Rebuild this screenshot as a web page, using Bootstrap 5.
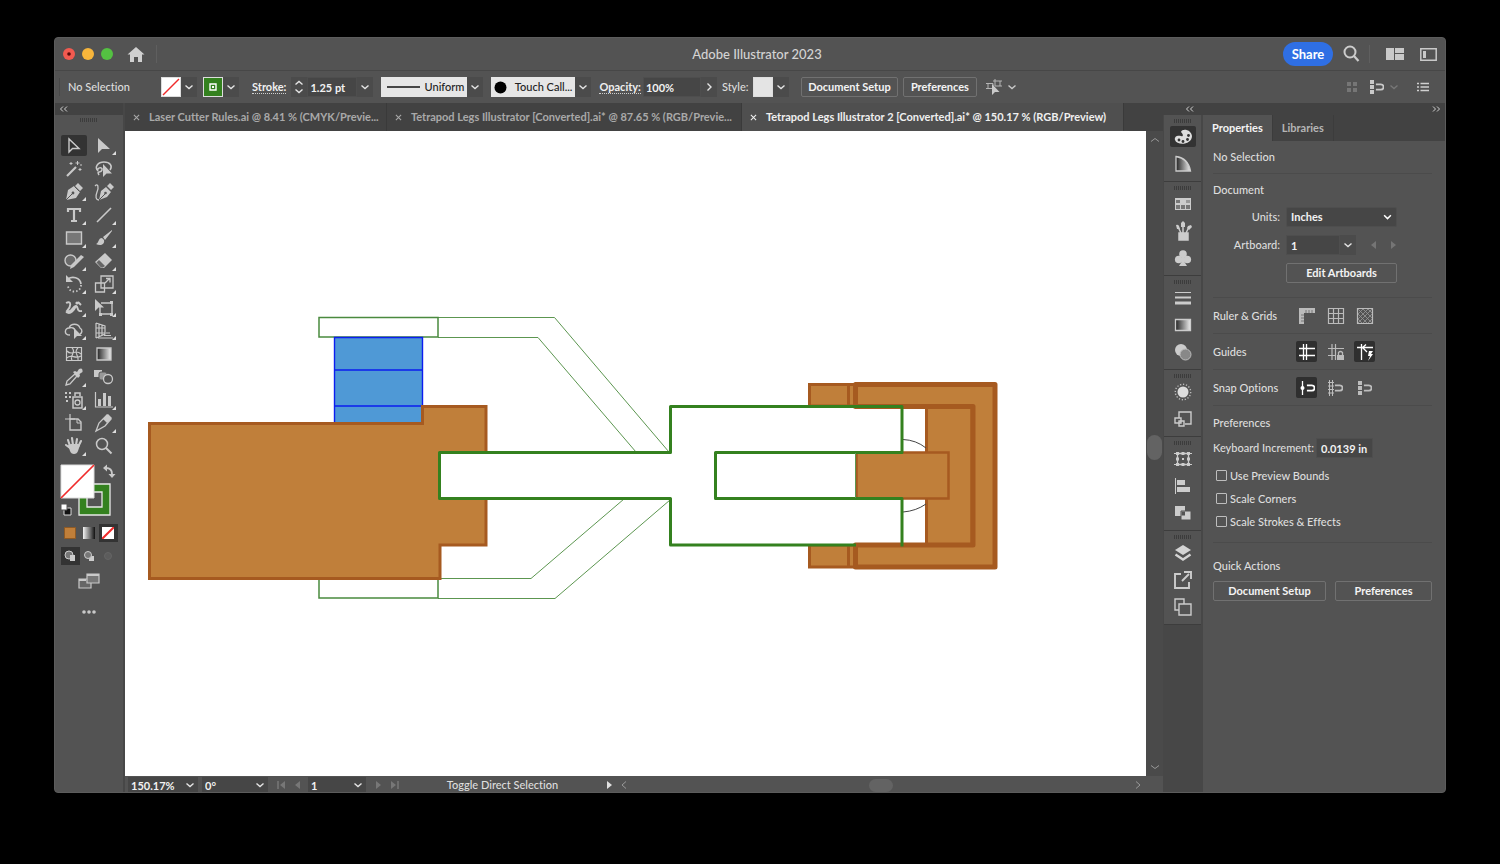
<!DOCTYPE html>
<html lang="en">
<head>
<meta charset="utf-8">
<meta name="viewport" content="width=device-width, initial-scale=1">
<title>Adobe Illustrator 2023</title>
<link href="https://cdn.jsdelivr.net/npm/bootstrap@5.3.0/dist/css/bootstrap.min.css" rel="stylesheet">
<style>
:root{--panel:#535353;--dark:#424242;--line:#474747;--field:#464646;--icon:#c9c9c9;--txt:#dedede}
body{background:#000;color:var(--txt);font-family:"Lato","Open Sans",sans-serif;font-size:11px;font-weight:500;line-height:14px;font-variant-ligatures:none;padding:37px 54px 71px}
button,input,select{font:inherit;color:inherit}
svg{display:block;fill:none;stroke:none}
.app-window{background:var(--panel);border-radius:4px;overflow:hidden;border:1px solid #5c5c5c}
.title-bar{height:33px;border-bottom:1px solid var(--line)}
.title-bar h1{font-size:13px;line-height:16px;font-weight:500;color:#d4d4d4;padding-left:14px}
.dot{width:12px;height:12px;border-radius:50%}
.plain-btn{background:none;border:0;padding:0;display:flex;align-items:center;justify-content:center;color:var(--icon)}
.share-btn{background:#2f6fe4;color:#fff;border:0;border-radius:12px;height:24px;width:50px;font-size:13px;font-weight:700}
.vline{width:1px;height:18px;background:#5f5f5f}
.control-bar{height:32px;color:var(--txt)}
.swatch{width:20px;height:20px;border:1px solid #ddd}
.drop{width:16px;height:20px;background:#4b4b4b;color:#e4e4e4}
.line-btn{background:transparent;border:1px solid #717171;border-radius:2px;color:#f4f4f4;font-weight:700;height:20px;padding:0;line-height:14px}
.field{background:var(--field);border:1px solid #4e4e4e;color:#f2f2f2;font-weight:700;height:20px;padding:0 2px;min-width:0;border-radius:0}
.props .field{padding:0 4px}
.under{border-bottom:1px dotted #cfcfcf;color:#f0f0f0;font-weight:700;line-height:13px}
.brush{background:#e6e6e6;color:#222;height:20px;border:0;padding:0 3px;display:flex;align-items:center;justify-content:space-between}
.dark-strip{background:var(--dark)}
.tool-col{width:70px;border-right:2px solid var(--line)}
.tool-grid{display:grid;grid-template-columns:30px 30px;grid-auto-rows:1fr;height:324px}
.tool{position:relative;border-radius:2px;color:var(--icon)}
.tool.active{background:#333;margin:1px 2px}
.more::after{content:"";position:absolute;right:3px;bottom:2px;border:2px solid transparent;border-right-color:#ddd;border-bottom-color:#ddd}
.grip{width:18px;height:4px;background:repeating-linear-gradient(90deg,#3c3c3c 0 1px,transparent 1px 2px)}
.doc-tab{color:#a9a9a9;font-weight:700;height:28px;border:0;border-right:1px solid #3a3a3a;padding:0 8px;background:var(--dark);white-space:nowrap}
.doc-tab.active{background:#4f4f4f;color:#f0f0f0}
.doc-tab a{color:inherit;text-decoration:none}
.doc-tab .plain-btn{color:inherit;width:7px;margin-right:9px}
.canvas{background:#fff;min-height:0}
.canvas svg{width:100%;height:100%}
.v-scroll{width:17px;background:#4a4a4a;color:#999}
.thumb{background:#636363;border-radius:8px}
.status-bar{height:16px;overflow:hidden;padding:2px 0 0 3px}
.status-bar .field,.status-bar .drop{height:16px;border-color:#464646;background:#464646}
.dock{width:40px;background:var(--line)}
.dock-group{background:var(--panel);border-bottom:1px solid #3d3d3d;margin:0 2px 0 1px;padding:4px 0 4px}
.dock-group .plain-btn{width:26px;height:27px}
.dock-group .lit{background:#333;border-radius:2px;height:21px;margin:3px 0}
.props{width:242px}
.prop-tab{height:26px;padding:0 9px;color:#b5b5b5;font-weight:700;background:var(--dark);border:0;border-right:1px solid #3c3c3c}
.prop-tab.active{background:var(--panel);color:#f4f4f4}
.sec{padding:9px 0;margin:0 13px 0 10px;border-bottom:1px solid #4b4b4b}
.sec-row{height:36px;padding:0}
.lbl{color:#dcdcdc}
.sec h2{font-size:11px;line-height:14px;font-weight:500;margin:0}
.mini{width:21px;height:21px;border-radius:2px;color:#bdbdbd}
.mini.on{background:#2f2f2f;color:#fff}
.units{appearance:none;width:111px;border-radius:2px;background:var(--field) url("data:image/svg+xml,%3Csvg xmlns='http://www.w3.org/2000/svg' viewBox='0 0 8 6'%3E%3Cpath d='M1 1l3 3 3-3' fill='none' stroke='%23fff' stroke-width='1.3'/%3E%3C/svg%3E") no-repeat right 4px center/9px 7px}
.tick{appearance:none;width:11px;height:11px;border:1px solid #bdbdbd;border-radius:1px;margin:0}
.tick-row{height:23px;gap:3px;padding-left:3px}
</style>
<script src="https://cdn.jsdelivr.net/npm/bootstrap@5.3.0/dist/js/bootstrap.bundle.min.js"></script>
</head>
<body class="min-vh-100 d-flex flex-column">
<svg width="0" height="0" class="position-absolute" aria-hidden="true">
<defs>
<linearGradient id="gr"><stop offset="0" stop-color="#222"/><stop offset="1" stop-color="#eee"/></linearGradient>
<linearGradient id="gr2"><stop offset="0" stop-color="#f4f4f4"/><stop offset="1" stop-color="#111"/></linearGradient>
<symbol id="chev" viewBox="0 0 10 10"><path d="M1.500 3.500 5 6.500 8.500 3.500" fill="none" stroke="currentColor" stroke-width="1.400"/></symbol>
<symbol id="close" viewBox="0 0 8 8"><path d="M1 1l6 6M7 1 1 7" stroke="currentColor" stroke-width="1.200"/></symbol>
<symbol id="dbl" viewBox="0 0 10 6"><path d="M4 .5 1.500 3 4 5.500M8 .5 5.500 3 8 5.500" fill="none" stroke="#d0d0d0"/></symbol>
<symbol id="dbr" viewBox="0 0 10 6"><path d="M2 .5 4.500 3 2 5.500M6 .5 8.500 3 6 5.500" fill="none" stroke="#d0d0d0"/></symbol>
<symbol id="mag" viewBox="0 0 10 10"><path d="M1 2h5.500a2.500 2.500 0 0 1 0 6H1" fill="none" stroke="currentColor" stroke-width="2"/></symbol>
</defs>
</svg>

<main class="app-window d-flex flex-column flex-grow-1">
<header class="title-bar d-grid align-items-center flex-shrink-0" style="grid-template-columns:1fr auto 1fr">
  <div class="d-flex align-items-center ps-2">
    <span class="dot" style="background:#f25a50;margin-right:7px"><svg viewBox="0 0 12 12"><circle cx="6" cy="6" r="1.800" fill="#5a0a08"/></svg></span>
    <span class="dot" style="background:#f7b53b;margin-right:7px"></span>
    <span class="dot" style="background:#54c142"></span>
    <button class="plain-btn" style="margin-left:14px" aria-label="Home"><svg width="18" height="17" viewBox="0 0 18 17"><path d="M9 1 .5 8.500H3V16h4v-5h4v5h4V8.500h2.500Z" fill="#d0d0d0"/></svg></button>
    <span class="vline" style="margin-left:11px"></span>
  </div>
  <h1 class="mb-0">Adobe Illustrator 2023</h1>
  <div class="d-flex align-items-center justify-content-end pe-2">
    <button class="share-btn">Share</button>
    <button class="plain-btn ms-2" aria-label="Search"><svg width="20" height="18" viewBox="0 0 20 18"><circle cx="9" cy="7" r="5.500" stroke="#ccc" stroke-width="2"/><path d="m13 11 4.500 5" stroke="#ccc" stroke-width="2.200"/></svg></button>
    <span class="vline ms-2"></span>
    <button class="plain-btn ms-3" aria-label="Arrange documents"><svg width="18" height="12" viewBox="0 0 18 12"><path d="M0 0h8v12H0zM9 0h9v5H9zM9 6h9v6H9z" fill="#c9c9c9"/></svg></button>
    <button class="plain-btn ms-3" aria-label="Workspace"><svg width="17" height="13" viewBox="0 0 17 13"><path d="M.8.800h15.400v11.400H.8z" stroke="#c9c9c9" stroke-width="1.500"/><path d="M3 3h3v7H3z" fill="#c9c9c9"/></svg></button>
  </div>
</header>

<section class="control-bar d-flex align-items-center flex-shrink-0" aria-label="Control bar">
  <span class="vline ms-1" style="background:#484848"></span>
  <span class="ms-2" style="width:93px">No Selection</span>
  <button class="plain-btn swatch bg-white" aria-label="Fill"><svg width="18" height="18"><path d="M1 17 17 1" stroke="#f02b2b" stroke-width="1.500"/></svg></button>
  <button class="plain-btn drop" aria-label="Fill options"><svg width="10" height="10"><use href="#chev"/></svg></button>
  <button class="plain-btn swatch" style="background:#34811f;margin-left:6px" aria-label="Stroke colour"><svg width="10" height="10"><path d="M2 2h6v6H2z" stroke="#fff" stroke-width="1.400"/><path d="M4 4h2v2H4z" fill="#fff"/></svg></button>
  <button class="plain-btn drop" aria-label="Stroke colour options"><svg width="10" height="10"><use href="#chev"/></svg></button>
  <label class="under" for="sw" style="margin-left:13px">Stroke:</label>
  <button class="plain-btn drop" style="margin-left:5px" aria-label="Step stroke"><svg width="10" height="16" viewBox="0 0 10 16"><path d="M1.500 5.500 5 2.500l3.500 3M1.500 10.500l3.500 3 3.500-3" stroke="#e4e4e4" stroke-width="1.400"/></svg></button>
  <input id="sw" class="field" style="width:50px" value="1.25 pt">
  <button class="plain-btn drop" aria-label="Stroke weights"><svg width="10" height="10"><use href="#chev"/></svg></button>
  <button class="brush ms-2" style="width:86px"><svg width="36" height="4"><path d="M3 2h33" stroke="#111" stroke-width="1.500"/></svg>Uniform</button>
  <button class="plain-btn drop" aria-label="Width profiles"><svg width="10" height="10"><use href="#chev"/></svg></button>
  <button class="brush ms-2" style="width:84px"><svg width="13" height="13"><circle cx="6.500" cy="6.500" r="6" fill="#000"/></svg>Touch Call...</button>
  <button class="plain-btn drop" aria-label="Brushes"><svg width="10" height="10"><use href="#chev"/></svg></button>
  <label class="under ms-2" for="op">Opacity:</label>
  <input id="op" class="field" style="width:58px;margin-left:2px" value="100%">
  <button class="plain-btn drop" aria-label="More opacity"><svg width="8" height="10"><path d="m2.500 1.500 3.500 3.500-3.500 3.500" stroke="#e4e4e4" stroke-width="1.400"/></svg></button>
  <span style="margin-left:5px;width:31px">Style:</span>
  <button class="plain-btn swatch" style="background:#e4e4e4" aria-label="Style"></button>
  <button class="plain-btn drop" aria-label="Styles"><svg width="10" height="10"><use href="#chev"/></svg></button>
  <button class="line-btn" style="width:97px;margin-left:12px">Document Setup</button>
  <button class="line-btn" style="width:74px;margin-left:5px">Preferences</button>
  <button class="plain-btn ms-2" aria-label="Select similar"><svg width="18" height="18" viewBox="0 0 18 18"><path d="M3 5.500h5v5H3zM10 3h5v5h-5zM1 5.500h2m-2 5h2M8 3h2M15 3h2M15 8h2M10 1v2" stroke="#b5b5b5"/><path d="m7 6 0 11 3-3h4.500Z" fill="#c9c9c9"/></svg></button>
  <button class="plain-btn ms-1" aria-label="Select similar options"><svg width="10" height="10"><use href="#chev"/></svg></button>
  <div class="ms-auto d-flex align-items-center pe-3">
    <svg width="12" height="12"><path d="M1 1h4v4H1zM7 1h4v4H7zM1 7h4v4H1zM7 7h4v4H7z" fill="#767676"/></svg>
    <button class="plain-btn" style="margin-left:12px" aria-label="Snap"><svg width="15" height="14" viewBox="0 0 15 14"><path d="M0 0h4v4H0zM0 5h4v4H0zM0 10h4v4H0z" fill="#c9c9c9"/><use href="#mag" x="5" y="2.500" width="9" height="9"/></svg></button>
    <button class="plain-btn ms-1" style="color:#777" aria-label="Snap options"><svg width="10" height="10"><use href="#chev"/></svg></button>
    <button class="plain-btn" style="margin-left:18px" aria-label="Menu"><svg width="12" height="10"><path d="M3.500 1.500H12M3.500 5H12M3.500 8.500H12M0 1.500h2M0 5h2M0 8.500h2" stroke="#d0d0d0" stroke-width="1.300"/></svg></button>
  </div>
</section>

<div class="d-flex flex-grow-1">
<!-- tools -->
<aside class="tool-col flex-shrink-0">
  <div class="dark-strip d-flex align-items-center ps-1" style="height:12px"><svg width="10" height="6"><use href="#dbl"/></svg></div>
  <div class="d-flex justify-content-center" style="height:19px;padding-top:3px"><span class="grip"></span></div>
  <div class="tool-grid mx-1">
    <button class="plain-btn tool active" aria-label="Selection"><svg width="20" height="20"><path d="M5 3v13l3.500-3.500h6.500Z" stroke="currentColor" stroke-width="1.400"/></svg></button>
    <button class="plain-btn tool more" aria-label="Direct selection"><svg width="20" height="20"><path d="M4 2v15l4-4h8Z" fill="currentColor"/></svg></button>
    <button class="plain-btn tool" aria-label="Magic wand"><svg width="20" height="20"><path d="m3 17 9-9" stroke="currentColor" stroke-width="2.200"/><path d="M13.500 2v4M11.500 4h4M7 3v3M5.500 4.500h3M16 9v3M14.500 10.500h3M17 5v2" stroke="currentColor"/></svg></button>
    <button class="plain-btn tool" aria-label="Lasso"><svg width="20" height="20"><path d="M4 12C0 8 4 3 10 3s9 4 6 8M4 12c-2-3 5-5 4-1s-6 0-3 5" stroke="currentColor" stroke-width="1.500"/><path d="M9 5v13l3.500-3.500H18Z" fill="currentColor"/></svg></button>
    <button class="plain-btn tool more" aria-label="Pen"><svg width="20" height="20"><path d="m11 4 3-3 5 5-3 3zM2 18 4 8l6-4 6 6-4 6Z" fill="currentColor"/><path d="m10.500 4.500 5 5M2 18l6-6" stroke="#535353"/><circle cx="9" cy="11" r="1.400" fill="#535353"/></svg></button>
    <button class="plain-btn tool" aria-label="Curvature"><svg width="20" height="20"><path d="m13 4 3-3 4 4-3 3zM5 18 7 9l5-4 5 5-4 5Z" fill="currentColor"/><path d="m12.500 4.500 4.500 4.500M5 18l6-6" stroke="#535353"/><circle cx="11.500" cy="11" r="1.300" fill="#535353"/><path d="M1 4c3-3 4 1 2 6s-1 8 2 8" stroke="currentColor" stroke-width="1.300"/></svg></button>
    <button class="plain-btn tool more" aria-label="Type"><svg width="20" height="20"><path d="M4 7V4h12v3M10 4v12M7 16h6" stroke="currentColor" stroke-width="2.200"/></svg></button>
    <button class="plain-btn tool more" aria-label="Line"><svg width="20" height="20"><path d="M3 17 17 3" stroke="currentColor" stroke-width="1.600"/></svg></button>
    <button class="plain-btn tool more" aria-label="Rectangle"><svg width="20" height="20"><path d="M2.500 4h15v12h-15z" fill="#777" stroke="currentColor" stroke-width="1.400"/></svg></button>
    <button class="plain-btn tool more" aria-label="Paintbrush"><svg width="20" height="20"><path d="M18 2 9 9l2 3 7-9ZM8 10c-4 0-3 5-6 6 4 2 9 1 8-4Z" fill="currentColor"/></svg></button>
    <button class="plain-btn tool more" aria-label="Shaper"><svg width="20" height="20"><circle cx="6.500" cy="9.500" r="5.500" fill="#6a6a6a" stroke="currentColor" stroke-width="1.400"/><path d="m6 18 1-4 10-10 3 2-10 10Z" fill="currentColor"/></svg></button>
    <button class="plain-btn tool more" aria-label="Eraser"><svg width="20" height="20"><path d="m11 2 7 7-8 8H7l-6-6Z" fill="currentColor"/><path d="m5 9 6 6-2 1.500H7L2.500 11.500Z" fill="#666"/></svg></button>
    <button class="plain-btn tool more" aria-label="Rotate"><svg width="20" height="20"><path d="M4 5c4-3 12-2 13 5" stroke="currentColor" stroke-width="1.800"/><path d="M17 11c0 8-12 9-13 1" stroke="currentColor" stroke-width="1.800" stroke-dasharray="1.500 2"/><path d="M2 1v7h7Z" fill="currentColor"/></svg></button>
    <button class="plain-btn tool more" aria-label="Scale"><svg width="20" height="20"><path d="M7 2h12v12H7zM1.500 9h9v9h-9zM11 9l5-5M12 4.500h4v4" stroke="currentColor" stroke-width="1.300"/></svg></button>
    <button class="plain-btn tool more" aria-label="Width"><svg width="20" height="20"><path d="M2 5c6-3 5 4 1 8 5 3 6-6 9-5s0 6 6 5M2 14c5 3 8-2 10-6M14 4l3 3" stroke="currentColor" stroke-width="1.900"/><circle cx="13" cy="5" r="1.600" fill="currentColor"/></svg></button>
    <button class="plain-btn tool more" aria-label="Free transform"><svg width="20" height="20"><path d="M7 5h11v11H6V9" stroke="currentColor" stroke-width="1.400"/><path d="M1 1v12l3.500-3.500H10ZM5 15h3v3H5zM16 15h3v3h-3zM16 3h3v3h-3z" fill="currentColor"/></svg></button>
    <button class="plain-btn tool more" aria-label="Shape builder"><svg width="20" height="20"><path d="M6 14C-1 14 1 7 5 7c2-5 9-5 11 0 3 2 2 5 0 6M5 7c3-1 6 0 6 3" stroke="currentColor" stroke-width="1.400"/><path d="M10 7v11l3-3h5Z" fill="currentColor"/></svg></button>
    <button class="plain-btn tool more" aria-label="Perspective grid"><svg width="20" height="20"><path d="M2 2v15M2 2l9 3v8L2 17M5 3v12M8 4v10M2 7h9M2 12h9M4 17h15M10 14.500h7M12 12h4" stroke="currentColor" stroke-width="1.200"/></svg></button>
    <button class="plain-btn tool" aria-label="Mesh"><svg width="20" height="20"><path d="M2.500 3.500h15v13h-15zM3 7c5 6 8-3 14 3M3 14c4-5 8 2 14-2M8 4c5 4-3 8 0 12M14 4c-5 4 1 8 0 12" stroke="currentColor" stroke-width="1.200"/></svg></button>
    <button class="plain-btn tool" aria-label="Gradient"><svg width="20" height="20"><path d="M3 4h14v12H3z" fill="url(#gr)" stroke="currentColor" stroke-width="1.300"/></svg></button>
    <button class="plain-btn tool more" aria-label="Eyedropper"><svg width="20" height="20"><path d="m2 18 1-4 8-7 2 2-7 8Z" stroke="currentColor" stroke-width="1.300"/><path d="m9 5 2-1 2 1 2-3q4-2 3.500 3l-3 2 .5 2-2 2Z" fill="currentColor"/></svg></button>
    <button class="plain-btn tool" aria-label="Blend"><svg width="20" height="20"><path d="M0 3h8v7H0z" fill="currentColor"/><rect x="5" y="5" width="8" height="8" rx="2" fill="#999" stroke="#555"/><circle cx="14" cy="12" r="4.500" fill="#535353" stroke="currentColor" stroke-width="1.300"/></svg></button>
    <button class="plain-btn tool more" aria-label="Symbol sprayer"><svg width="20" height="20"><path d="M9 7h9v11H9zM11 6V3h5v3" stroke="currentColor" stroke-width="1.500"/><circle cx="13.500" cy="12.500" r="2.500" stroke="currentColor" stroke-width="1.300"/><path d="M1 3h2M5 3h2M1 7h2M5 7h2M2 11h2" stroke="currentColor" stroke-width="2"/></svg></button>
    <button class="plain-btn tool more" aria-label="Graph"><svg width="20" height="20"><path d="M1.500 2v15H19" stroke="currentColor" stroke-width="1.200"/><path d="M4 9h3v7H4zM9 3h3v13H9zM14 6h3v10h-3z" fill="currentColor"/></svg></button>
    <button class="plain-btn tool" aria-label="Artboard"><svg width="20" height="20"><path d="M1 6h10M6 1v5" stroke="currentColor" stroke-width="1.200"/><path d="M6 6h8l3 3v8H6z" stroke="currentColor" stroke-width="1.400"/><path d="M13 6v4h4" stroke="currentColor"/></svg></button>
    <button class="plain-btn tool more" aria-label="Slice"><svg width="20" height="20"><path d="m2 18 3-8 8-8 4 4-6 7Z" stroke="currentColor" stroke-width="1.300"/><path d="m9 6 5-5 4 4-5 5Z" fill="currentColor"/></svg></button>
    <button class="plain-btn tool more" aria-label="Hand"><svg width="20" height="20"><path d="M6 12 2 9M6 10 4 4M9 9 8 2M12 9l1-6M14 11l3-6" stroke="currentColor" stroke-width="2.100" stroke-linecap="round"/><path d="M4 9l3-1h7l2 1-2 6q-1 3-4 3-3 0-4-3Z" fill="currentColor"/></svg></button>
    <button class="plain-btn tool" aria-label="Zoom"><svg width="20" height="20"><circle cx="8" cy="8" r="5.500" stroke="currentColor" stroke-width="1.500"/><path d="m12 12 5.500 5.500" stroke="currentColor" stroke-width="2"/></svg></button>
  </div>
  <div class="d-flex flex-column align-items-center">
    <svg width="60" height="60" viewBox="59 461 60 60" style="margin-top:2px" role="img" aria-label="Fill and stroke">
      <path d="M79 485h31v31H79z" fill="#34811f" stroke="#e8e8e8" stroke-width="1.300"/><path d="M87 493h15v15H87z" fill="#535353" stroke="#e8e8e8" stroke-width="1.300"/>
      <path d="M61 466h33v33H61z" fill="#fff" stroke="#ddd"/><path d="m61 499 33-33" stroke="#f02b2b" stroke-width="1.700"/>
      <path d="M106 469q6 0 6 6" stroke="#c9c9c9" stroke-width="1.800"/><path d="m103 469 4-3.500v7zM112 479l-3.500-4h7z" fill="#c9c9c9"/>
      <path d="M64 509h7v7h-7z" fill="#111" stroke="#ddd"/><path d="M61 505h6v6h-6z" fill="#fff" stroke="#555"/>
    </svg>
    <div class="d-flex mt-1">
      <button class="plain-btn" style="width:19px;height:18px" aria-label="Color"><svg width="12" height="12"><path d="M.5.500h11v11H.5z" fill="#c07f3a" stroke="#8e5a25"/></svg></button>
      <button class="plain-btn" style="width:19px;height:18px" aria-label="Gradient"><svg width="12" height="12"><path d="M0 0h12v12H0z" fill="url(#gr2)"/></svg></button>
      <button class="plain-btn" style="width:19px;height:18px;background:#333" aria-label="None"><svg width="12" height="12"><path d="M0 0h12v12H0z" fill="#fff"/><path d="M0 12 12 0" stroke="#f02b2b" stroke-width="2"/></svg></button>
    </div>
    <div class="d-flex" style="margin-top:5px">
      <button class="plain-btn" style="width:19px;height:18px;background:#333" aria-label="Draw normal"><svg width="12" height="12"><circle cx="5" cy="5" r="4" fill="#777" stroke="#ccc"/><path d="M6 5h5v6H6z" fill="#ccc"/></svg></button>
      <button class="plain-btn" style="width:19px;height:18px" aria-label="Draw behind"><svg width="12" height="12"><path d="M6 6h5v5H6z" fill="#ccc"/><circle cx="5" cy="5" r="3.500" fill="#777" stroke="#ccc"/></svg></button>
      <button class="plain-btn" style="width:19px;height:18px" aria-label="Draw inside"><svg width="12" height="12"><circle cx="6" cy="6" r="3.500" fill="#5c5c5c" stroke="#656565"/></svg></button>
    </div>
    <button class="plain-btn mt-2" aria-label="Screen mode"><svg width="22" height="16"><path d="M1 6h12v9H1z" fill="#666" stroke="#c9c9c9" stroke-width="1.200"/><path d="M9 1h12v9H9z" fill="#777" stroke="#c9c9c9" stroke-width="1.200"/><path d="M9 2h12M1 7h7" stroke="#c9c9c9" stroke-width="2"/></svg></button>
    <button class="plain-btn mt-3" style="height:14px" aria-label="Edit toolbar"><svg width="16" height="4"><circle cx="3" cy="2" r="1.800" fill="#c9c9c9"/><circle cx="8" cy="2" r="1.800" fill="#c9c9c9"/><circle cx="13" cy="2" r="1.800" fill="#c9c9c9"/></svg></button>
  </div>
</aside>

<!-- document -->
<section class="d-flex flex-column flex-grow-1" style="min-width:0">
  <nav class="d-flex dark-strip flex-shrink-0" aria-label="Documents">
    <div class="doc-tab d-flex align-items-center" style="width:262px"><button class="plain-btn" aria-label="Close"><svg width="7" height="7"><use href="#close"/></svg></button><a href="#">Laser Cutter Rules.ai @ 8.41 % (CMYK/Previe...</a></div>
    <div class="doc-tab d-flex align-items-center" style="width:355px"><button class="plain-btn" aria-label="Close"><svg width="7" height="7"><use href="#close"/></svg></button><a href="#">Tetrapod Legs Illustrator [Converted].ai* @ 87.65 % (RGB/Previe...</a></div>
    <div class="doc-tab active d-flex align-items-center" style="width:382px"><button class="plain-btn" aria-label="Close"><svg width="7" height="7"><use href="#close"/></svg></button><a href="#">Tetrapod Legs Illustrator 2 [Converted].ai* @ 150.17 % (RGB/Preview)</a></div>
  </nav>
  <div class="d-flex flex-grow-1" style="min-height:0">
    <div class="canvas flex-grow-1" style="height:645px">
      <svg viewBox="125 131 1021 645" preserveAspectRatio="xMidYMid meet" role="img" aria-label="Tetrapod leg artwork">
        <g stroke="#5c9650" stroke-width="1">
          <path d="M438 317.500H554.500L669 452M438 337.500H538L636 452M438 578.500H531L624 499M438 598.500H555L670 500"/>
          <path d="M319 317.500H438V337H319ZM319 578.500H438V598H319Z" stroke="#4a8a3e" stroke-width="1.500"/>
        </g>
        <path d="M334.500 337.500H422.500V424H334.500ZM334.500 370H422.500M334.500 406H422.500" fill="#4f99d6" stroke="#0b1df0" stroke-width="1.400"/>
        <path d="M149.500 423.500H422.500V406.500H486V545H440V578.500H149.500Z" fill="#c07f3a" stroke="#a65a20" stroke-width="3"/>
        <g fill="#c07f3a" stroke="#a65a20" stroke-width="3">
          <path d="M809.500 384.500H856V406H809.500ZM848.500 384.500V406M809.500 545H856V567H809.500ZM848.500 545V567"/>
          <path d="M926.500 407H972V545H926.500Z"/>
        </g>
        <path d="M440 452.500H670.500V406.500H902V545H670.500V498.500H440Z" fill="#fff"/>
        <path d="M903 439.500Q916 440 926 448M903 512Q916 511 926 504" stroke="#444"/>
        <path d="M855.500 384.500H995V567H855.500V545H973V406.500H855.500Z" fill="#c07f3a" stroke="#a65a20" stroke-width="5" stroke-linejoin="round"/>
        <path d="M856.500 452.500H948.500V498.500H856.500Z" fill="#c07f3a" stroke="#a65a20" stroke-width="2.500"/>
        <path d="M856 545H670.500V498.500H439.500V452.500H670.500V406.500H902V452.500H715.500V498.500H902V546.500" stroke="#34811f" stroke-width="3" stroke-linejoin="round"/>
        <path d="M855.500 453V498" stroke="#5c9650"/>
      </svg>
    </div>
    <div class="v-scroll d-flex flex-column align-items-center flex-shrink-0 py-1">
      <svg width="10" height="10"><path d="m1 6.500 4-3 4 3" stroke="#999"/></svg>
      <span class="flex-grow-1"></span>
      <span class="thumb" style="width:15px;height:25px;margin-bottom:12px"></span>
      <span class="flex-grow-1"></span>
      <svg width="10" height="10"><path d="m1 3.500 4 3 4-3" stroke="#999"/></svg>
    </div>
  </div>
  <footer class="status-bar d-flex align-items-center flex-shrink-0">
    <input class="field" style="width:54px" value="150.17%" aria-label="Zoom">
    <button class="plain-btn drop" aria-label="Zoom levels"><svg width="10" height="10"><use href="#chev"/></svg></button>
    <input class="field ms-1" style="width:50px" value="0°" aria-label="Rotation">
    <button class="plain-btn drop" aria-label="Rotation angles"><svg width="10" height="10"><use href="#chev"/></svg></button>
    <span class="d-flex align-items-center gap-2 ms-2"><svg width="10" height="8"><path d="M2 0v8" stroke="#777" stroke-width="1.500"/><path d="M9 0v8L4 4Z" fill="#777"/></svg><svg width="8" height="8"><path d="M6 0v8L1 4Z" fill="#777"/></svg></span>
    <input class="field" style="width:42px;margin-left:6px" value="1" aria-label="Artboard number">
    <button class="plain-btn drop" aria-label="Artboards"><svg width="10" height="10"><use href="#chev"/></svg></button>
    <span class="d-flex align-items-center gap-2 ms-2"><svg width="8" height="8"><path d="M2 0v8l5-4Z" fill="#777"/></svg><svg width="10" height="8"><path d="M8 0v8" stroke="#777" stroke-width="1.500"/><path d="M1 0v8l5-4Z" fill="#777"/></svg></span>
    <span class="text-center" style="width:205px">Toggle Direct Selection</span>
    <button class="plain-btn" aria-label="Status options"><svg width="8" height="10"><path d="M2 1v8l5-4Z" fill="#e0e0e0"/></svg></button>
    <div class="d-flex align-items-center flex-grow-1 px-2"><svg width="6" height="8"><path d="M5 .5 1 4l4 3.500" stroke="#999"/></svg><span class="flex-grow-1"></span><span class="thumb" style="width:24px;height:13px"></span><span class="flex-grow-1"></span><svg width="6" height="8"><path d="m1 .5 4 3.500-4 3.500" stroke="#999"/></svg></div>
    <span style="width:14px"></span>
  </footer>
</section>

<!-- icon dock -->
<aside class="dock flex-shrink-0">
  <div class="dark-strip d-flex align-items-center justify-content-end pe-1" style="height:12px"><svg width="10" height="6" class="me-1"><use href="#dbl"/></svg></div>
  <div class="dock-group d-flex flex-column align-items-center">
    <span class="grip"></span>
    <button class="plain-btn lit" aria-label="Color"><svg width="20" height="18"><path d="M8 4c1-4 10-3 11 4 0 9-15 10-17 4-1-4 3-5 6-4 2 1 3-1 0-4Z" fill="#ddd"/><g fill="#333"><circle cx="6" cy="12" r="1.400"/><circle cx="10" cy="13.500" r="1.400"/><circle cx="14.500" cy="11.500" r="1.400"/><circle cx="15.500" cy="7.500" r="1.400"/></g></svg></button>
    <button class="plain-btn" aria-label="Color guide"><svg width="18" height="18"><path d="M2 1.500Q14 3 16.500 16H2Z" fill="url(#gr)" stroke="#ccc" stroke-width="1.300"/></svg></button>
  </div>
  <div class="dock-group d-flex flex-column align-items-center">
    <span class="grip"></span>
    <button class="plain-btn" aria-label="Swatches"><svg width="18" height="18"><path d="M1 3h16v12H1z" fill="#ccc"/><path d="M2 5h4v3H2zM2 10h4v4H2zM7 10h4v4H7zM12 10h4v4h-4z" fill="#777"/><path d="M12 5h4v3h-4z" fill="#999"/></svg></button>
    <button class="plain-btn" aria-label="Brushes"><svg width="18" height="20"><path d="M5 12h9v7H5zM7 12 4 6M9 12V3M12 12l3-6" fill="#ccc" stroke="#ccc" stroke-width="1.500"/><path d="M2 4q2-1 3 1l1 3-3 0ZM9 0l2 2v4H7V2ZM14 5l3-1 1 2-3 3-2-2Z" fill="#ccc"/></svg></button>
    <button class="plain-btn" aria-label="Symbols"><svg width="18" height="18"><g fill="#ccc"><circle cx="9" cy="5" r="3.800"/><circle cx="4.700" cy="10.500" r="3.800"/><circle cx="13.300" cy="10.500" r="3.800"/><path d="M8 7h2l.5 6 2.500 4H5l2.500-4Z"/></g></svg></button>
  </div>
  <div class="dock-group d-flex flex-column align-items-center">
    <span class="grip"></span>
    <button class="plain-btn" aria-label="Stroke"><svg width="18" height="18"><path d="M1 3.500h16" stroke="#ccc"/><path d="M1 8.500h16" stroke="#ccc" stroke-width="2"/><path d="M1 14h16" stroke="#ccc" stroke-width="3"/></svg></button>
    <button class="plain-btn" aria-label="Gradient"><svg width="18" height="18"><path d="M1.500 3.500h15v11h-15z" fill="url(#gr)" stroke="#ccc" stroke-width="1.300"/></svg></button>
    <button class="plain-btn" aria-label="Transparency"><svg width="18" height="18"><circle cx="7" cy="7" r="6" fill="#ccc"/><circle cx="11.500" cy="11.500" r="5.500" fill="#888" stroke="#bbb"/></svg></button>
  </div>
  <div class="dock-group d-flex flex-column align-items-center">
    <span class="grip"></span>
    <button class="plain-btn" aria-label="Appearance"><svg width="18" height="18"><circle cx="9" cy="9" r="5.500" fill="#ddd"/><circle cx="9" cy="9" r="7.700" stroke="#bbb" stroke-width="1.400" stroke-dasharray="1.300 1.700"/></svg></button>
    <button class="plain-btn" aria-label="Graphic styles"><svg width="18" height="18"><path d="M5 8V2h12v12h-6M1 8h6v5H1zM5 11h5v5H5z" stroke="#ccc" stroke-width="1.400"/></svg></button>
  </div>
  <div class="dock-group d-flex flex-column align-items-center">
    <span class="grip"></span>
    <button class="plain-btn" aria-label="Transform"><svg width="18" height="18"><path d="M3.500 3.500h11v11h-11z" stroke="#ccc" stroke-width="1.300"/><path d="M2 2h3v3H2zM7.500 2h3v3h-3zM13 2h3v3h-3zM2 7.500h3v3H2zM13 7.500h3v3h-3zM2 13h3v3H2zM7.500 13h3v3h-3zM13 13h3v3h-3zM8 8h2v2H8zM0 3h2v1H0zM16 3h2v1h-2zM0 14h2v1H0zM16 14h2v1h-2z" fill="#ccc"/></svg></button>
    <button class="plain-btn" aria-label="Align"><svg width="18" height="18"><path d="M1.500 1v16" stroke="#ccc"/><path d="M3 3h8v5H3zM3 10h13v5H3z" fill="#ccc"/></svg></button>
    <button class="plain-btn" aria-label="Pathfinder"><svg width="18" height="18"><path d="M1 2h10v10H1z" fill="#ccc"/><path d="M7 7h10v9H7z" fill="#ccc" stroke="#535353"/><path d="M7.500 7.500h3.500v4H7.500z" fill="#535353"/></svg></button>
  </div>
  <div class="dock-group d-flex flex-column align-items-center">
    <span class="grip"></span>
    <button class="plain-btn" aria-label="Layers"><svg width="18" height="18"><path d="m9 1 8 5-8 5-8-5Z" fill="#d4d4d4"/><path d="m1.500 10.500 7.500 5 7.500-5" stroke="#d4d4d4" stroke-width="2.400"/></svg></button>
    <button class="plain-btn" aria-label="Asset export"><svg width="20" height="20"><path d="M8 4H2v14h14v-6M9 11l7-7M11 2h7v7" stroke="#ccc" stroke-width="1.900"/></svg></button>
    <button class="plain-btn" aria-label="Artboards"><svg width="18" height="18"><path d="M5 12H1V1h9v5M5 6h12v11H5z" stroke="#ccc" stroke-width="1.400"/></svg></button>
  </div>
</aside>

<!-- properties -->
<aside class="props flex-shrink-0">
  <div class="dark-strip d-flex align-items-center justify-content-end pe-1" style="height:12px"><svg width="10" height="6"><use href="#dbr"/></svg></div>
  <div class="d-flex dark-strip" role="tablist">
    <button class="prop-tab active" role="tab">Properties</button>
    <button class="prop-tab" role="tab">Libraries</button>
  </div>
  <div class="sec"><h2>No Selection</h2></div>
  <div class="sec d-flex flex-column gap-2" style="padding-bottom:14px">
    <h2 style="margin-bottom:2px">Document</h2>
    <div class="d-flex align-items-center"><label class="lbl text-end" for="un" style="width:67px;margin-right:6px">Units:</label><select id="un" class="field units"><option>Inches</option></select></div>
    <div class="d-flex align-items-center"><label class="lbl text-end" for="ab" style="width:67px;margin-right:6px">Artboard:</label><input id="ab" class="field" style="width:54px" value="1"><button class="plain-btn drop" aria-label="Artboard list"><svg width="10" height="10"><use href="#chev"/></svg></button><svg width="8" height="8" style="margin-left:14px"><path d="M6 0v8L1 4Z" fill="#757575"/></svg><svg width="8" height="8" style="margin-left:11px"><path d="M2 0v8l5-4Z" fill="#757575"/></svg></div>
    <button class="line-btn" style="width:111px;margin-left:73px">Edit Artboards</button>
  </div>
  <div class="sec sec-row d-flex align-items-center"><h2 style="width:83px">Ruler &amp; Grids</h2><div class="d-flex gap-2">
    <button class="plain-btn mini" aria-label="Rulers"><svg width="18" height="18"><path d="M1 1h16v5H6v11H1Z" fill="#bbb"/><path d="M8 3v3M11 3v3M14 3v3M3 8h3M3 11h3M3 14h3" stroke="#777"/></svg></button>
    <button class="plain-btn mini" aria-label="Grid"><svg width="18" height="18"><path d="M1.500 1.500h15v15h-15zM6.500 1v16M11.500 1v16M1 6.500h16M1 11.500h16" stroke="#bbb" stroke-width="1.200"/></svg></button>
    <button class="plain-btn mini" aria-label="Transparency grid"><svg width="18" height="18"><path d="M1.500 1.500h15v15h-15z" stroke="#bbb" stroke-width="1.200"/><path d="m2 7 5-5M2 12 12 2M2 16 16 2M7 16l9-9M12 16l4-4M2 12l4 4M2 7l9 9M2 2l14 14M7 2l9 9M12 2l4 4" stroke="#999" stroke-width=".8"/></svg></button>
  </div></div>
  <div class="sec sec-row d-flex align-items-center"><h2 style="width:83px">Guides</h2><div class="d-flex gap-2">
    <button class="plain-btn mini on" aria-label="Show guides"><svg width="18" height="18"><path d="M5.500 1v16M8.500 1v16M1 5.500h16M1 12.500h16" stroke="#fff" stroke-width="1.300"/></svg></button>
    <button class="plain-btn mini" aria-label="Lock guides"><svg width="18" height="18"><path d="M5 1v16M8.500 1v16M1 5.500h16M1 12.500h8" stroke="#bbb" stroke-width="1.200"/><path d="M10 12h7v5h-7z" fill="#bbb"/><path d="M11.500 12V9.500q2-2 4 0V12" stroke="#bbb" stroke-width="1.300"/></svg></button>
    <button class="plain-btn mini on" aria-label="Smart guides"><svg width="18" height="18"><path d="M5.500 1v16M1 4.500h16M6 5l4-3.500M6 4l5 5" stroke="#fff" stroke-width="1.300"/><path d="m13 8-1 5h2l-2 5 5-7h-2l2-3Z" fill="#fff"/></svg></button>
  </div></div>
  <div class="sec sec-row d-flex align-items-center"><h2 style="width:83px">Snap Options</h2><div class="d-flex gap-2">
    <button class="plain-btn mini on" aria-label="Snap to point"><svg width="18" height="18"><path d="M4.500 2v14" stroke="currentColor" stroke-width="1.300"/><circle cx="4.500" cy="9" r="2" fill="currentColor"/><use href="#mag" x="8" y="4.500" width="9" height="9"/></svg></button>
    <button class="plain-btn mini" aria-label="Snap to grid"><svg width="18" height="18"><path d="M2.500 1v16M5.500 1v16M1 3.500h6M1 7h6M1 10.500h6M1 14h6" stroke="currentColor"/><use href="#mag" x="7" y="4.500" width="9" height="9"/></svg></button>
    <button class="plain-btn mini" aria-label="Snap to pixel"><svg width="18" height="18"><path d="M2 2h4v4H2zM2 7h4v4H2zM2 12h4v4H2z" fill="currentColor"/><use href="#mag" x="7" y="4.500" width="9" height="9"/></svg></button>
  </div></div>
  <div class="sec" style="padding-top:10px"><h2>Preferences</h2>
    <div class="d-flex align-items-center mt-2" style="margin-bottom:6px"><label class="lbl" for="ki" style="width:103px">Keyboard Increment:</label><input id="ki" class="field" style="width:57px" value="0.0139 in"></div>
    <div class="d-flex align-items-center tick-row"><input class="tick" type="checkbox" id="c1"><label for="c1">Use Preview Bounds</label></div>
    <div class="d-flex align-items-center tick-row"><input class="tick" type="checkbox" id="c2"><label for="c2">Scale Corners</label></div>
    <div class="d-flex align-items-center tick-row"><input class="tick" type="checkbox" id="c3"><label for="c3">Scale Strokes &amp; Effects</label></div>
  </div>
  <div class="sec border-0 pt-3"><h2>Quick Actions</h2>
    <div class="d-flex mt-2" style="gap:9px"><button class="line-btn" style="width:113px">Document Setup</button><button class="line-btn flex-grow-1">Preferences</button></div>
  </div>
</aside>
</div>
</main>
</body>
</html>
